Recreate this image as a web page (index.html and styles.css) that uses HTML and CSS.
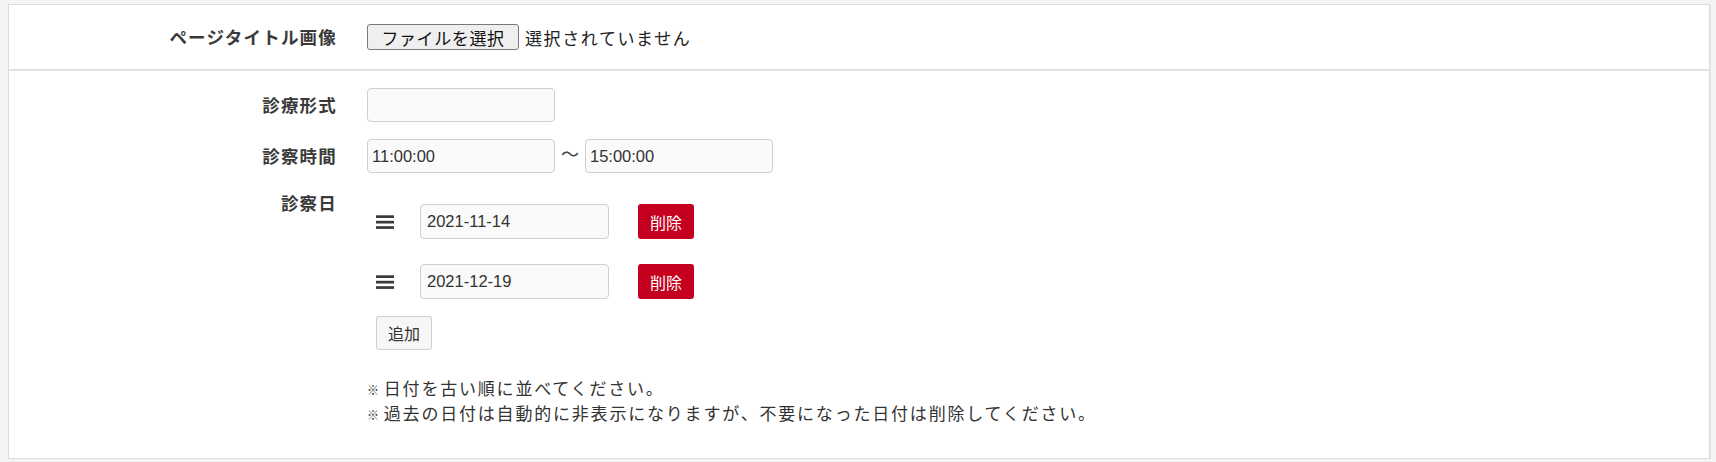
FILE: index.html
```html
<!DOCTYPE html>
<html lang="ja">
<head>
<meta charset="utf-8">
<title>編集</title>
<link rel="stylesheet" href="styles.css">
</head>
<body>
<div class="panel">
  <div class="row row-top">
    <div class="label">ページタイトル画像</div>
    <div class="field">
      <span class="file-btn">ファイルを選択</span>
      <span class="file-name">選択されていません</span>
    </div>
  </div>
  <div class="section">
    <div class="row">
      <div class="label">診療形式</div>
      <div class="field"><input class="input input-text" type="text" value=""></div>
    </div>
    <div class="row">
      <div class="label">診察時間</div>
      <div class="field field-time">
        <input class="input input-time" type="text" value="11:00:00">
        <span class="tilde">〜</span>
        <input class="input input-time" type="text" value="15:00:00">
      </div>
    </div>
    <div class="row row-start">
      <div class="label">診察日</div>
      <div class="field field-col">
        <ul class="dates">
          <li class="date-item">
            <span class="handle"><svg width="18" height="14" viewBox="0 0 18 14"><rect x="0" y="0.3" width="18" height="2.7" fill="#3a3a3a"/><rect x="0" y="5.8" width="18" height="2.7" fill="#3a3a3a"/><rect x="0" y="11.2" width="18" height="2.7" fill="#3a3a3a"/></svg></span>
            <input class="input input-date" type="text" value="2021-11-14">
            <button class="btn-delete" type="button">削除</button>
          </li>
          <li class="date-item">
            <span class="handle"><svg width="18" height="14" viewBox="0 0 18 14"><rect x="0" y="0.3" width="18" height="2.7" fill="#3a3a3a"/><rect x="0" y="5.8" width="18" height="2.7" fill="#3a3a3a"/><rect x="0" y="11.2" width="18" height="2.7" fill="#3a3a3a"/></svg></span>
            <input class="input input-date" type="text" value="2021-12-19">
            <button class="btn-delete" type="button">削除</button>
          </li>
        </ul>
        <button class="btn-add" type="button">追加</button>
        <p class="note"><span class="mark">※</span>日付を古い順に並べてください。<br><span class="mark">※</span>過去の日付は自動的に非表示になりますが、不要になった日付は削除してください。</p>
      </div>
    </div>
  </div>
</div>
</body>
</html>
```

FILE: styles.css
```css
* { box-sizing: border-box; }

body {
  margin: 0;
  padding: 4px 6px 0 8px;
  background: #f4f4f4;
  font-family: "Liberation Sans", "Noto Sans CJK JP", sans-serif;
  color: #333;
}

.panel {
  background: #fff;
  border: 1px solid #dcdcdc;
  box-shadow: 1px 1px 0 #e6e6e6;
}

.row {
  display: grid;
  grid-template-columns: 328px 1fr;
  column-gap: 30px;
  align-items: center;
}

.row-top {
  height: 66px;
  border-bottom: 2px solid #e0e0e0;
}

.row-start { align-items: start; }

.label {
  text-align: right;
  font-family: "Noto Sans CJK JP", sans-serif;
  font-weight: bold;
  font-size: 17.5px;
  letter-spacing: 1.2px;
  line-height: 26px;
  color: #3a3a3a;
}

.field {
  display: flex;
  align-items: center;
}

.file-btn {
  display: inline-flex;
  align-items: center;
  justify-content: center;
  width: 152px;
  height: 26px;
  border: 1px solid #7a7a7a;
  border-radius: 3px;
  background: #efefef;
  font-family: "Noto Sans CJK JP", sans-serif;
  font-size: 17px;
  letter-spacing: 0.6px;
  color: #111;
}

.file-name {
  margin-left: 6px;
  font-family: "Noto Sans CJK JP", sans-serif;
  font-size: 17px;
  letter-spacing: 1.6px;
  color: #222;
}

.section {
  display: flex;
  flex-direction: column;
  gap: 17px;
  padding: 17px 0 32px;
}

.input {
  display: block;
  margin: 0;
  background: #fafafa;
  border: 1px solid #cfcfcf;
  border-radius: 4px;
  font-family: "Liberation Sans", sans-serif;
  font-size: 16.5px;
  color: #333;
  outline: none;
}

.input-text,
.input-time {
  width: 188px;
  height: 34px;
  padding: 0 4px;
}

.field-time { align-items: flex-start; }

.tilde {
  width: 30px;
  padding-top: 4px;
  text-align: center;
  font-family: "Noto Sans CJK JP", sans-serif;
  font-size: 18px;
  line-height: 20px;
  color: #444;
}

.field-col {
  flex-direction: column;
  align-items: flex-start;
}

.dates {
  list-style: none;
  margin: 14px 0 0;
  padding: 0 0 0 9px;
}

.date-item {
  display: flex;
  align-items: center;
  height: 35px;
}

.date-item + .date-item { margin-top: 25px; }

.handle {
  display: flex;
  width: 18px;
  margin-right: 26px;
}

.input-date {
  width: 189px;
  height: 35px;
  padding: 0 6px;
}

.btn-delete {
  margin-left: 29px;
  width: 56px;
  height: 35px;
  border: none;
  border-radius: 3px;
  background: #c5001e;
  color: #fff;
  font-family: "Noto Sans CJK JP", sans-serif;
  font-size: 16px;
  padding: 0;
}

.btn-add {
  margin: 17px 0 0 9px;
  width: 56px;
  height: 34px;
  border: 1px solid #cfcfcf;
  border-radius: 3px;
  background: #f6f6f6;
  color: #333;
  font-family: "Noto Sans CJK JP", sans-serif;
  font-size: 16px;
  padding: 0;
}

.note {
  margin: 26px 0 0;
  font-family: "Noto Sans CJK JP", sans-serif;
  font-size: 17px;
  line-height: 23px;
  letter-spacing: 1.8px;
  color: #333;
}

.mark {
  font-size: 12px;
  margin-right: 3px;
}
```
